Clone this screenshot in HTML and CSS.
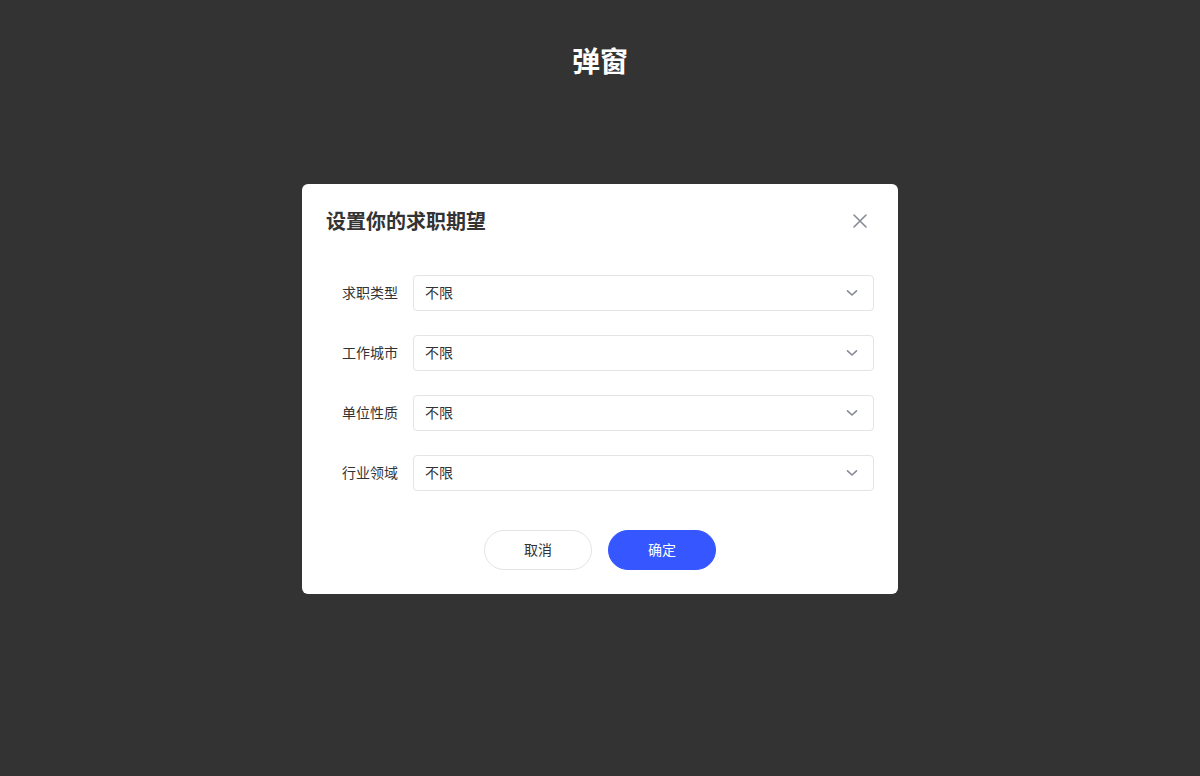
FILE: index.html
```html
<!DOCTYPE html>
<html lang="zh-CN">
<head>
<meta charset="utf-8">
<title>弹窗</title>
<link rel="stylesheet" href="styles.css">
</head>
<body>
<div class="page">
  <h1 class="page-title">弹窗</h1>
  <div class="dialog">
    <div class="dialog-header">
      <h2 class="dialog-title">设置你的求职期望</h2>
      <button class="close" aria-label="关闭">
        <svg width="14" height="14" viewBox="0 0 14 14"><path d="M1 1L13 13M13 1L1 13" stroke="#878b96" stroke-width="1.6" fill="none" stroke-linecap="round"/></svg>
      </button>
    </div>
    <div class="dialog-body">
      <div class="row">
        <span class="label">求职类型</span>
        <div class="select"><span>不限</span><svg class="chev" width="12" height="8" viewBox="0 0 12 8"><path d="M1.5 1.8L6 6L10.5 1.8" stroke="#878b96" stroke-width="1.6" fill="none" stroke-linecap="round" stroke-linejoin="round"/></svg></div>
      </div>
      <div class="row">
        <span class="label">工作城市</span>
        <div class="select"><span>不限</span><svg class="chev" width="12" height="8" viewBox="0 0 12 8"><path d="M1.5 1.8L6 6L10.5 1.8" stroke="#878b96" stroke-width="1.6" fill="none" stroke-linecap="round" stroke-linejoin="round"/></svg></div>
      </div>
      <div class="row">
        <span class="label">单位性质</span>
        <div class="select"><span>不限</span><svg class="chev" width="12" height="8" viewBox="0 0 12 8"><path d="M1.5 1.8L6 6L10.5 1.8" stroke="#878b96" stroke-width="1.6" fill="none" stroke-linecap="round" stroke-linejoin="round"/></svg></div>
      </div>
      <div class="row">
        <span class="label">行业领域</span>
        <div class="select"><span>不限</span><svg class="chev" width="12" height="8" viewBox="0 0 12 8"><path d="M1.5 1.8L6 6L10.5 1.8" stroke="#878b96" stroke-width="1.6" fill="none" stroke-linecap="round" stroke-linejoin="round"/></svg></div>
      </div>
    </div>
    <div class="dialog-footer">
      <button class="btn btn-cancel">取消</button>
      <button class="btn btn-ok">确定</button>
    </div>
  </div>
</div>
</body>
</html>
```

FILE: styles.css
```css
html, body {
  margin: 0;
  padding: 0;
  background: #333333;
  font-family: "Noto Sans CJK SC", "Noto Sans", sans-serif;
}
.page {
  width: 1200px;
  height: 776px;
  display: flex;
  flex-direction: column;
  align-items: center;
}
.page-title {
  margin: 40px 0 0;
  font-size: 28px;
  line-height: 40px;
  font-weight: 700;
  color: #ffffff;
}
.dialog {
  margin-top: 104px;
  width: 596px;
  box-sizing: border-box;
  background: #ffffff;
  border-radius: 6px;
  padding: 23px 24px 24px;
}
.dialog-header {
  display: flex;
  align-items: center;
  justify-content: space-between;
  height: 28px;
}
.dialog-title {
  margin: 0;
  font-size: 20px;
  line-height: 28px;
  font-weight: 700;
  color: #333333;
}
.close {
  border: 0;
  background: none;
  padding: 0;
  width: 14px;
  height: 14px;
  margin-right: 7px;
  display: flex;
  align-items: center;
  justify-content: center;
}
.dialog-body {
  margin-top: 40px;
  display: flex;
  flex-direction: column;
  gap: 24px;
}
.row {
  display: flex;
  align-items: center;
}
.label {
  width: 72px;
  margin-right: 15px;
  text-align: right;
  font-size: 14px;
  line-height: 20px;
  color: #333333;
  position: relative;
  top: -1px;
}
.select {
  flex: 1;
  height: 36px;
  box-sizing: border-box;
  border: 1px solid #e3e4e8;
  border-radius: 4px;
  padding: 0 15px 0 11px;
  display: flex;
  align-items: center;
  justify-content: space-between;
  font-size: 14px;
  color: #333333;
}
.select span {
  position: relative;
  top: -1px;
}
.dialog-footer {
  margin-top: 39px;
  display: flex;
  justify-content: center;
  gap: 16px;
}
.btn {
  width: 108px;
  height: 40px;
  border-radius: 20px;
  font-family: "Noto Sans CJK SC", "Noto Sans", sans-serif;
  font-size: 14px;
  cursor: pointer;
  padding: 0 0 2px;
}
.btn-cancel {
  background: #ffffff;
  border: 1px solid #e3e4e8;
  color: #333333;
}
.btn-ok {
  background: #3657ff;
  border: 1px solid #3657ff;
  color: #ffffff;
}
```
